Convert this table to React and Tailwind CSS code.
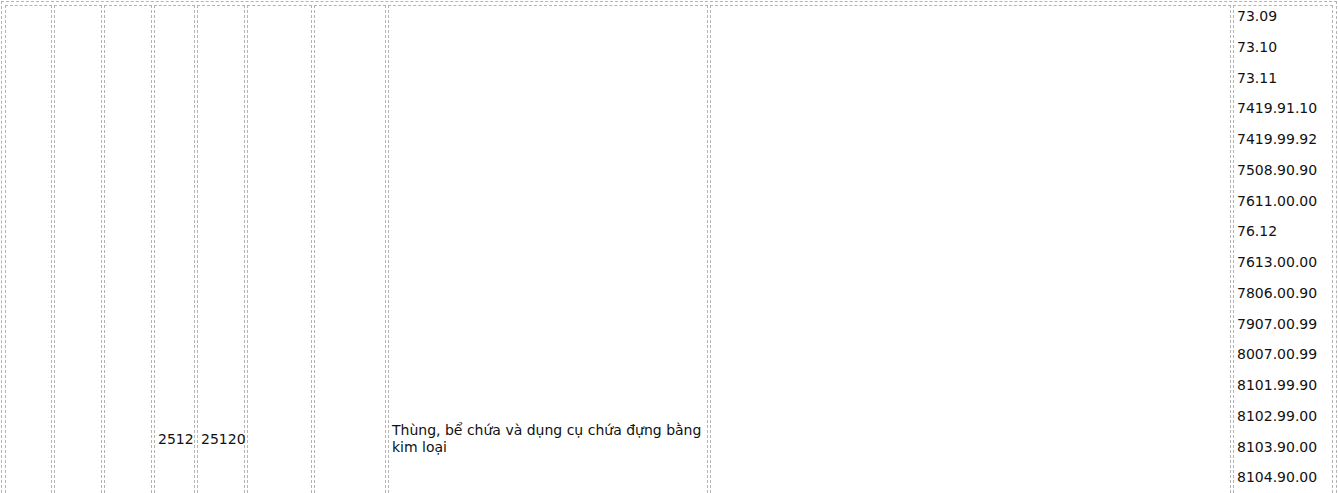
import React from "react";

const codes = [
  "73.09",
  "73.10",
  "73.11",
  "7419.91.10",
  "7419.99.92",
  "7508.90.90",
  "7611.00.00",
  "76.12",
  "7613.00.00",
  "7806.00.90",
  "7907.00.99",
  "8007.00.99",
  "8101.99.90",
  "8102.99.00",
  "8103.90.00",
  "8104.90.00",
];

const cell = "border border-dashed border-[#b4b4b4] px-[3px] py-[2px] align-middle";

export default function App() {
  return (
    <div className="h-[493px] w-[1338px] overflow-hidden bg-white font-['DejaVu_Sans','Verdana',sans-serif] text-[14px] text-[#111]">
      <table className="ml-[1px] mt-[1px] w-[1336px] table-fixed border-separate border-spacing-[2px] border border-dashed border-[#b4b4b4] p-[1px]">
        <tbody>
          <tr>
            <td className={`${cell} h-[868px] w-[47px]`}></td>
            <td className={`${cell} w-[48px]`}></td>
            <td className={`${cell} w-[48px]`}></td>
            <td className={`${cell} w-[41px]`}>2512</td>
            <td className={`${cell} w-[48px]`}>25120</td>
            <td className={`${cell} w-[65px]`}></td>
            <td className={`${cell} w-[72px]`}></td>
            <td className={`${cell} w-[320px] leading-[17px]`}>
              Thùng, bể chứa và dụng cụ chứa đựng bằng kim loại
            </td>
            <td className={`${cell} w-[521px]`}></td>
            <td className={`${cell} w-[100px] !align-top !pt-[2px]`}>
              <div className="flex flex-col gap-[14px]">
                {codes.map((c) => (
                  <div key={c} className="leading-[16.75px]">
                    {c}
                  </div>
                ))}
              </div>
            </td>
          </tr>
        </tbody>
      </table>
    </div>
  );
}
